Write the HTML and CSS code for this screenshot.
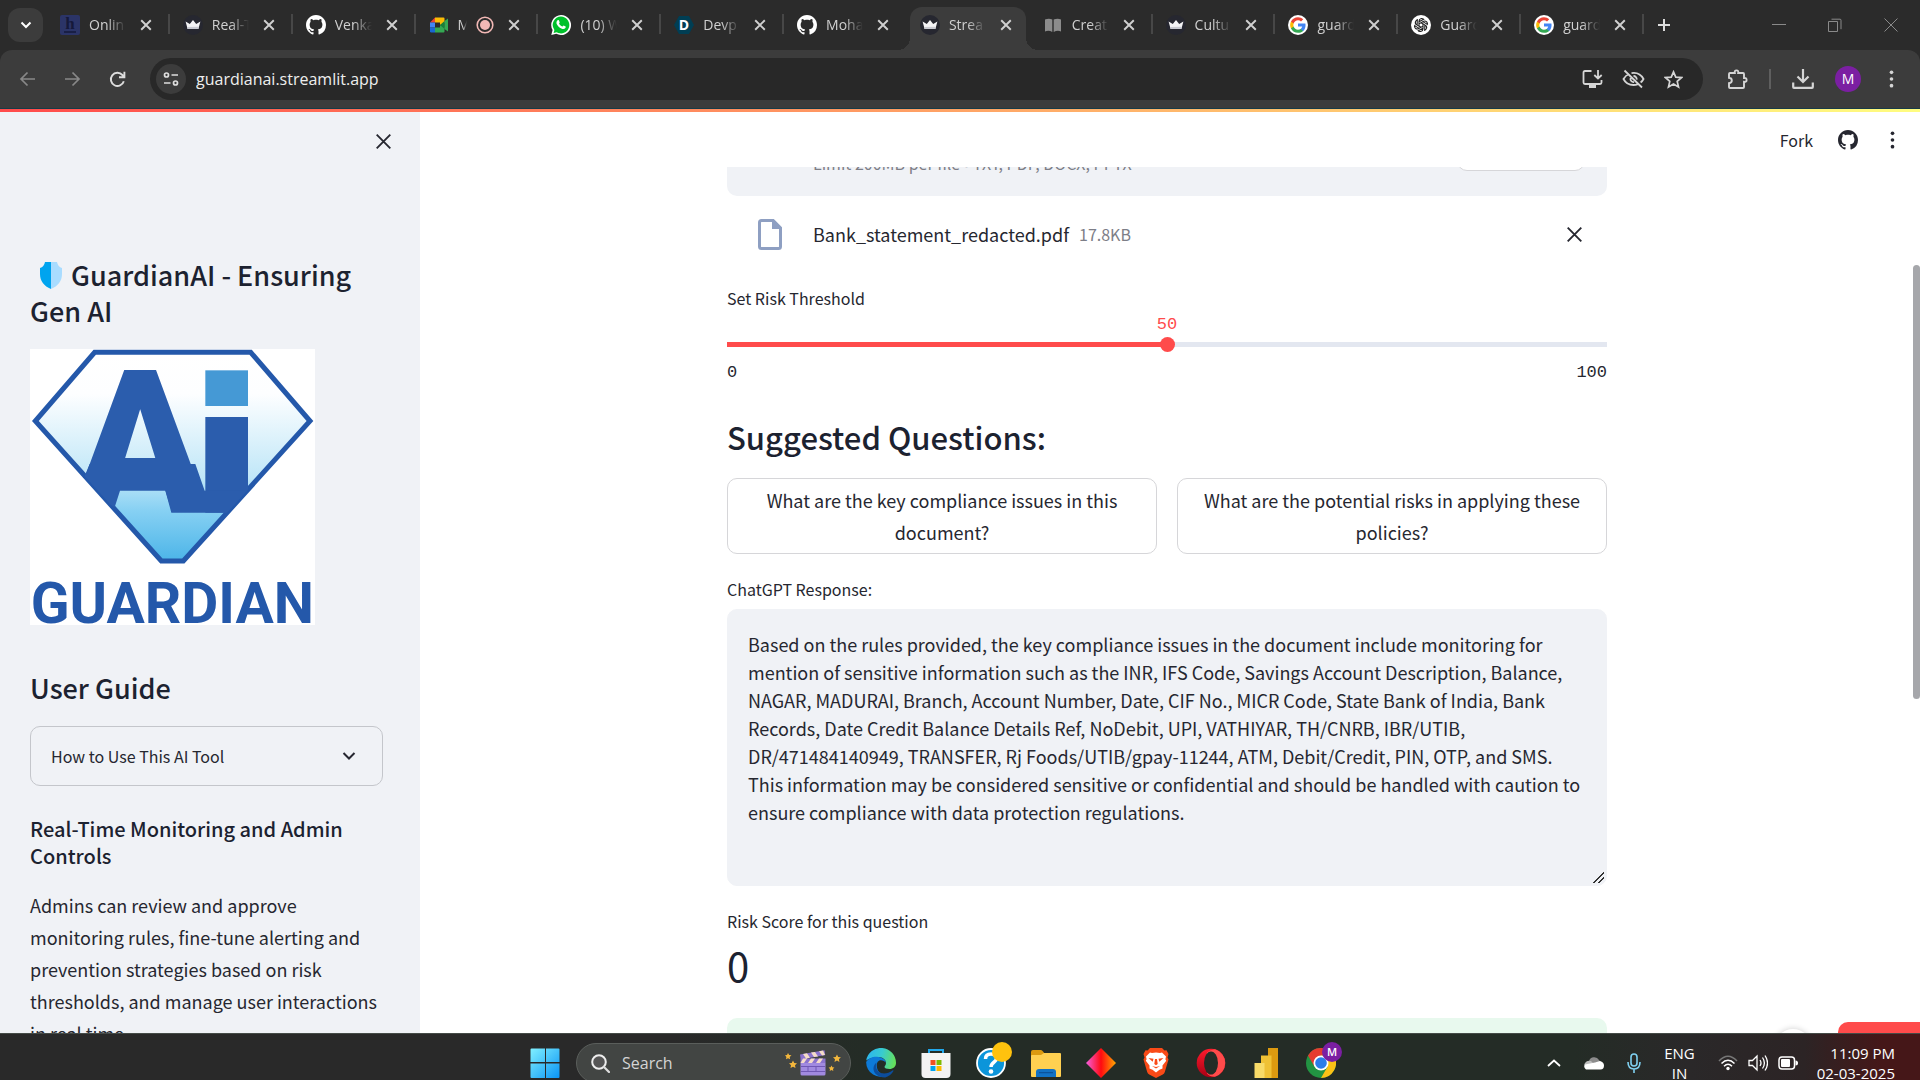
FILE: index.html
```html
<!DOCTYPE html>
<html lang="en">
  <head>
    <meta charset="UTF-8" />
    <meta name="viewport" content="width=device-width, initial-scale=1.0" />
    <title>GuardianAI</title>
    <link rel="stylesheet" href="styles.css" />
  </head>
  <body>
    <!-- shared icons -->
    <svg class="sprite" aria-hidden="true">
      <symbol id="i-close" viewBox="0 0 10 10">
        <path d="M1 1l8 8M9 1l-8 8" fill="none" stroke="currentColor" />
      </symbol>
      <symbol id="i-github" viewBox="0 0 16 16">
        <path fill="currentColor" d="M8 0C3.58 0 0 3.58 0 8c0 3.54 2.29 6.53 5.47 7.59.4.07.55-.17.55-.38 0-.19-.01-.82-.01-1.49-2.01.37-2.53-.49-2.69-.94-.09-.23-.48-.94-.82-1.13-.28-.15-.68-.52-.01-.53.63-.01 1.08.58 1.23.82.72 1.21 1.87.87 2.33.66.07-.52.28-.87.51-1.07-1.78-.2-3.64-.89-3.64-3.95 0-.87.31-1.59.82-2.15-.08-.2-.36-1.02.08-2.12 0 0 .67-.21 2.2.82.64-.18 1.32-.27 2-.27s1.36.09 2 .27c1.53-1.04 2.2-.82 2.2-.82.44 1.1.16 1.92.08 2.12.51.56.82 1.27.82 2.15 0 3.07-1.87 3.75-3.65 3.95.29.25.54.73.54 1.48 0 1.07-.01 1.93-.01 2.2 0 .21.15.46.55.38A8.01 8.01 0 0 0 16 8c0-4.42-3.58-8-8-8z" />
      </symbol>
      <symbol id="i-crown" viewBox="0 0 20 20">
        <circle cx="10" cy="10" r="10" fill="#262730" />
        <path fill="#f4f4f6" d="M2.6 6.6l4.2 2.3L10 5l3.2 3.9 4.2-2.3-2 7.4H4.6z" />
        <path fill="#c9cad2" d="M4.2 12l11.6-.2-.5 2.2H4.6z" />
      </symbol>
      <symbol id="i-google" viewBox="-2 -2 28 28">
        <circle cx="12" cy="12" r="14" fill="#fff" />
        <path fill="#4285f4" d="M22.56 12.25c0-.78-.07-1.53-.2-2.25H12v4.26h5.92c-.26 1.37-1.04 2.53-2.21 3.31v2.77h3.57c2.08-1.92 3.28-4.74 3.28-8.09z" />
        <path fill="#34a853" d="M12 23c2.97 0 5.46-.98 7.28-2.66l-3.57-2.77c-.98.66-2.23 1.06-3.71 1.06-2.86 0-5.29-1.93-6.16-4.53H2.18v2.84C3.99 20.53 7.7 23 12 23z" />
        <path fill="#fbbc05" d="M5.84 14.09c-.22-.66-.35-1.36-.35-2.09s.13-1.43.35-2.09V7.07H2.18C1.43 8.55 1 10.22 1 12s.43 3.45 1.18 4.93l3.66-2.84z" />
        <path fill="#ea4335" d="M12 5.38c1.62 0 3.06.56 4.21 1.64l3.15-3.15C17.45 2.09 14.97 1 12 1 7.7 1 3.99 3.47 2.18 7.07l3.66 2.84c.87-2.6 3.3-4.53 6.16-4.53z" />
      </symbol>
      <symbol id="i-dots" viewBox="0 0 6 24">
        <circle cx="3" cy="4" r="2.2" fill="currentColor" />
        <circle cx="3" cy="12" r="2.2" fill="currentColor" />
        <circle cx="3" cy="20" r="2.2" fill="currentColor" />
      </symbol>
    </svg>

    <!-- browser tabs -->
    <div class="tab-strip">
      <button class="tab-search" aria-label="Search tabs">
        <svg width="12" height="8" viewBox="0 0 12 8"><path d="M1.5 1.5L6 6l4.5-4.5" fill="none" stroke="#fff" stroke-width="2" /></svg>
      </button>
      <div class="tabs">
        <div class="tab">
          <svg class="favicon" viewBox="0 0 20 20"><rect width="20" height="20" rx="2" fill="#2b3467" /><text x="10" y="14" text-anchor="middle" class="fav-h">h</text><path d="M4 17h12" stroke="#15193a" stroke-width="1.5" /></svg>
          <a href="#">Onlin</a>
          <button aria-label="Close tab"><svg><use href="#i-close" /></svg></button>
        </div>
        <div class="tab">
          <svg class="favicon"><use href="#i-crown" /></svg>
          <a href="#">Real-T</a>
          <button aria-label="Close tab"><svg><use href="#i-close" /></svg></button>
        </div>
        <div class="tab">
          <svg class="favicon"><use href="#i-github" /></svg>
          <a href="#">Venka</a>
          <button aria-label="Close tab"><svg><use href="#i-close" /></svg></button>
        </div>
        <div class="tab">
          <svg class="favicon" viewBox="0 0 20 20">
            <path fill="#ea4335" d="M1 7.5L6 2.5v5z" /><path fill="#fbbc04" d="M6 2.5h8.500q1 0 1 1v4L11 10V7.5H6z" />
            <path fill="#4285f4" d="M1 7.5h5v5H1z" /><path fill="#1967d2" d="M1 12.5h5v5H2.3q-1.3 0-1.3-1.3z" />
            <path fill="#34a853" d="M6 12.5h5V10l4.5 2.5v4q0 1-1 1H6z" /><path fill="#188038" d="M11 10l4.5-4v8z" /><path fill="#34a853" d="M15.5 6L19 3.500v13L15.500 14z" />
          </svg>
          <a href="#">Meet</a>
          <svg class="recording" viewBox="0 0 18 18"><circle cx="9" cy="9" r="7.8" fill="none" stroke="#f2b8b5" stroke-width="1.6" /><circle cx="9" cy="9" r="5" fill="#f2b8b5" /></svg>
          <button aria-label="Close tab"><svg><use href="#i-close" /></svg></button>
        </div>
        <div class="tab">
          <svg class="favicon" viewBox="0 0 20 20">
            <path fill="#fff" d="M10 0a10 10 0 1 1-4.7 18.8L.3 20l1.3-4.900A10 10 0 0 1 10 0z" />
            <path fill="#00c12b" d="M10 1.6a8.400 8.400 0 1 1-4.400 15.600l-3 .7.8-2.900A8.400 8.400 0 0 1 10 1.600z" />
            <path fill="#fff" d="M6.600 5.300c.4-.4 1-.4 1.200 0l.9 1.900c.1.400-.7 1.200-.7 1.400.7 1.400 1.800 2.400 3.300 3 .3 0 1-1.100 1.300-1.100l2 1c.3.200.1 1.100-.2 1.500-.9 1.100-2.200 1.200-3.500.7-2.300-.8-4.100-2.400-5.200-4.700-.5-1.300-.2-2.800.9-3.700z" />
          </svg>
          <a href="#">(10) W</a>
          <button aria-label="Close tab"><svg><use href="#i-close" /></svg></button>
        </div>
        <div class="tab">
          <svg class="favicon" viewBox="0 0 20 20"><path fill="#003e54" d="M5 1h10l5 9-5 9H5l-5-9z" /><text x="10" y="15" text-anchor="middle" class="fav-d">D</text></svg>
          <a href="#">Devp</a>
          <button aria-label="Close tab"><svg><use href="#i-close" /></svg></button>
        </div>
        <div class="tab no-divider">
          <svg class="favicon"><use href="#i-github" /></svg>
          <a href="#">Moha</a>
          <button aria-label="Close tab"><svg><use href="#i-close" /></svg></button>
        </div>
        <div class="tab no-divider active">
          <svg class="favicon"><use href="#i-crown" /></svg>
          <a href="#">Strea</a>
          <button aria-label="Close tab"><svg><use href="#i-close" /></svg></button>
        </div>
        <div class="tab">
          <svg class="favicon" viewBox="0 0 20 20"><path fill="#8c8c8c" d="M2 4.5q4-1.5 7.3 0v12.500q-3.500-2-7.300-.5zM10.700 4.500q4-1.500 7.300 0v12q-3.500-1.500-7.300.5z" /></svg>
          <a href="#">Creat</a>
          <button aria-label="Close tab"><svg><use href="#i-close" /></svg></button>
        </div>
        <div class="tab">
          <svg class="favicon"><use href="#i-crown" /></svg>
          <a href="#">Cultu</a>
          <button aria-label="Close tab"><svg><use href="#i-close" /></svg></button>
        </div>
        <div class="tab">
          <svg class="favicon"><use href="#i-google" /></svg>
          <a href="#">guard</a>
          <button aria-label="Close tab"><svg><use href="#i-close" /></svg></button>
        </div>
        <div class="tab">
          <svg class="favicon" viewBox="0 0 20 20">
            <circle cx="10" cy="10" r="10" fill="#fff" />
            <g fill="none" stroke="#222" stroke-width="1.1" stroke-linejoin="round">
              <path id="petal" d="M8 11.200V6.300q0-2.300 2.200-2.800 2-.3 3 1.200M8 6.700l4.200-2.300" />
              <use href="#petal" transform="rotate(60 10 10)" /><use href="#petal" transform="rotate(120 10 10)" />
              <use href="#petal" transform="rotate(180 10 10)" /><use href="#petal" transform="rotate(240 10 10)" />
              <use href="#petal" transform="rotate(300 10 10)" />
            </g>
          </svg>
          <a href="#">Guard</a>
          <button aria-label="Close tab"><svg><use href="#i-close" /></svg></button>
        </div>
        <div class="tab">
          <svg class="favicon"><use href="#i-google" /></svg>
          <a href="#">guard</a>
          <button aria-label="Close tab"><svg><use href="#i-close" /></svg></button>
        </div>
      </div>
      <button class="new-tab" aria-label="New tab">
        <svg width="14" height="14" viewBox="0 0 14 14"><path d="M7 1v12M1 7h12" stroke="#ddd" stroke-width="2" /></svg>
      </button>
      <div class="window-controls">
        <button aria-label="Minimize"><svg width="14" height="14" viewBox="0 0 14 14"><path d="M0 6.5h14" stroke="#8a8a8a" /></svg></button>
        <button aria-label="Restore"><svg width="14" height="14" viewBox="0 0 14 14"><path d="M.5 3.500h9v10h-9zM3.500 1.200h8.500q1 0 1 1v9" fill="none" stroke="#8a8a8a" /></svg></button>
        <button aria-label="Close"><svg width="14" height="14" viewBox="0 0 14 14"><path d="M.5.5l13 13M13.500.5l-13 13" stroke="#8a8a8a" /></svg></button>
      </div>
    </div>

    <!-- address bar -->
    <div class="toolbar">
      <div class="nav-buttons">
        <button aria-label="Back"><svg width="17" height="16" viewBox="0 0 17 16"><path d="M16 8H2M8.500 1.500L2 8l6.500 6.500" fill="none" stroke="#888" stroke-width="1.7" /></svg></button>
        <button aria-label="Forward"><svg width="17" height="16" viewBox="0 0 17 16"><path d="M1 8h14M8.500 1.500L15 8l-6.500 6.500" fill="none" stroke="#888" stroke-width="1.7" /></svg></button>
        <button aria-label="Reload"><svg width="17" height="17" viewBox="0 0 17 17"><path d="M14.800 10.200A6.600 6.600 0 1 1 13.400 4l2 2M15.400.8V6.200H10" fill="none" stroke="#ddd" stroke-width="1.9" /></svg></button>
      </div>
      <div class="omnibox">
        <button class="site-info" aria-label="Site information">
          <svg width="16" height="14" viewBox="0 0 16 14" fill="none" stroke="#ddd" stroke-width="1.7"><circle cx="3.5" cy="3" r="2" /><path d="M8.500 3H15M1 11h6.500" /><circle cx="12.5" cy="11" r="2" /></svg>
        </button>
        <input type="text" value="guardianai.streamlit.app" aria-label="Address" />
        <div class="omnibox-actions">
          <button aria-label="Install app"><svg width="21" height="20" viewBox="0 0 21 20" fill="none" stroke="#d5d5d5" stroke-width="1.8"><path d="M9.500 2H3q-1.500 0-1.500 1.500v10Q1.500 15 3 15h15q1.500 0 1.500-1.500V11M16 1v8M12.300 6l3.700 3.500L19.700 6" /><path d="M7 17h7" stroke-width="4" /></svg></button>
          <button aria-label="Tracking protection"><svg width="23" height="20" viewBox="0 0 23 20" fill="none" stroke="#d5d5d5" stroke-width="1.8"><path d="M2.500 1.500l17.500 17M7 5C4.500 6 2.700 7.700 1.500 10c2 4 5.800 6 10 6 1.500 0 2.700-.2 4-.7M9.500 4.100c5-.8 9.700 1.600 12 5.900-.7 1.400-1.700 2.600-2.900 3.500M11.500 7a3.200 3.200 0 0 1 3.200 3.600M8.600 9a3.200 3.200 0 0 0 3.500 4.100" /></svg></button>
          <button aria-label="Bookmark"><svg width="19" height="19" viewBox="0 0 20 20"><path d="M10 2l2.400 5.500 6 .5-4.500 4 1.400 5.900L10 14.800 4.700 17.900l1.400-5.900-4.500-4 6-.5z" fill="none" stroke="#d5d5d5" stroke-width="1.8" /></svg></button>
        </div>
      </div>
      <div class="toolbar-actions">
        <button aria-label="Extensions"><svg width="21" height="21" viewBox="0 0 21 21"><path d="M3 4h4.800q-.5-2.600 1.700-2.600T11.200 4H16q1 0 1 1v4q2.600-.4 2.600 1.900T17 12.800V18q0 1-1 1H3q-1 0-1-1v-3.800q2.800-.3 2.800-2.700T2 8.800V5q0-1 1-1z" fill="none" stroke="#d5d5d5" stroke-width="1.9" /></svg></button>
        <span class="separator"></span>
        <button aria-label="Downloads"><svg width="22" height="20" viewBox="0 0 22 20" fill="none" stroke="#d5d5d5" stroke-width="2.2"><path d="M11 0v12.500M5.500 7.500L11 13l5.500-5.500M1.200 13.500V18q0 .8.800.8h18q.8 0 .8-.8v-4.500" /></svg></button>
        <button class="profile">M</button>
        <button class="menu" aria-label="Menu"><svg width="5" height="20"><use href="#i-dots" /></svg></button>
      </div>
    </div>
    <div class="decoration"></div>

    <div class="app">
      <aside class="sidebar">
        <div class="sidebar-header">
          <button aria-label="Close sidebar"><svg class="thin-close"><use href="#i-close" /></svg></button>
        </div>
        <h2 class="sidebar-title">
          <svg class="shield" viewBox="0 0 22 27"><path fill="#00a4ef" d="M11 0v27C4 24 0 19 0 12V6q4-1 5-6z" /><path fill="#a9dcff" d="M11 0v27c7-3 11-8 11-15V6q-4-1-5-6z" /></svg>
          GuardianAI - Ensuring Gen AI
        </h2>

        <svg class="brand" viewBox="0 0 855 828" role="img" aria-label="Guardian AI">
          <defs>
            <linearGradient id="sky" x1="0" y1="0" x2="0" y2="1">
              <stop offset="0" stop-color="#fff" /><stop offset=".2" stop-color="#fdfeff" />
              <stop offset=".6" stop-color="#c0e7f8" /><stop offset=".76" stop-color="#86d0f3" />
              <stop offset="1" stop-color="#4cb5e8" />
            </linearGradient>
            <clipPath id="gem"><path d="M194 10h468l178 206-380 420h-66L16 216z" /></clipPath>
          </defs>
          <rect width="855" height="828" fill="#fff" />
          <path d="M194 10h468l178 206-380 420h-66L16 216z" fill="url(#sky)" stroke="#2458aa" stroke-width="15" />
          <g clip-path="url(#gem)" fill="#2b5dad">
            <text x="130" y="483" class="brand-a">A</text>
            <rect x="526" y="204" width="128" height="287" />
            <!-- base band that joins both letters -->
            <path d="M179 345h317l28 80h130v66H424l-18-66H270l-16 50-104-60z" />
          </g>
          <rect x="526" y="64" width="128" height="107" fill="#4599d5" />
          <text x="427" y="822" text-anchor="middle" class="brand-name">GUARDIAN</text>
        </svg>

        <h2 class="guide-title">User Guide</h2>
        <button class="expander">
          <span>How to Use This AI Tool</span>
          <svg width="14" height="10" viewBox="0 0 14 10"><path d="M1.500 2L7 7.500 12.500 2" fill="none" stroke="currentColor" stroke-width="2" /></svg>
        </button>
        <h3 class="admin-title">Real-Time Monitoring and Admin Controls</h3>
        <p class="admin-text">
          Admins can review and approve monitoring rules, fine-tune alerting and
          prevention strategies based on risk thresholds, and manage user
          interactions in real time.
        </p>
      </aside>

      <main class="main">
        <header class="app-header">
          <a href="#">Fork</a>
          <a href="#" aria-label="GitHub"><svg width="20" height="20"><use href="#i-github" /></svg></a>
          <button aria-label="App menu"><svg width="5" height="20"><use href="#i-dots" /></svg></button>
        </header>

        <div class="viewport">
          <div class="block">
            <!-- file uploader -->
            <div class="dropzone">
              <div class="dropzone-text">
                <span>Drag and drop file here</span>
                <small>Limit 200MB per file • TXT, PDF, DOCX, PPTX</small>
              </div>
              <button class="browse">Browse files</button>
            </div>
            <div class="file-row">
              <svg class="file-icon" width="24" height="31" viewBox="0 0 24 31"><path d="M3.500 1.500h11.700l7.300 7.300v18.700q0 2-2 2h-17q-2 0-2-2v-24q0-2 2-2z" fill="none" stroke="#8e9fc2" stroke-width="3" /><path d="M14 1l9 9h-9z" fill="#8e9fc2" /></svg>
              <span class="file-name">Bank_statement_redacted.pdf</span>
              <small>17.8KB</small>
              <button aria-label="Remove file"><svg class="thin-close"><use href="#i-close" /></svg></button>
            </div>

            <!-- slider -->
            <div class="slider">
              <label for="risk">Set Risk Threshold</label>
              <output for="risk">50</output>
              <input type="range" id="risk" min="0" max="100" value="50" />
              <div class="slider-ticks"><span>0</span><span>100</span></div>
            </div>

            <h2 class="questions-title">Suggested Questions:</h2>
            <div class="questions">
              <button>What are the key compliance issues in this document?</button>
              <button>What are the potential risks in applying these policies?</button>
            </div>

            <label class="response-label" for="response">ChatGPT Response:</label>
            <textarea id="response">Based on the rules provided, the key compliance issues in the document include monitoring for mention of sensitive information such as the INR, IFS Code, Savings Account Description, Balance, NAGAR, MADURAI, Branch, Account Number, Date, CIF No., MICR Code, State Bank of India, Bank Records, Date Credit Balance Details Ref, NoDebit, UPI, VATHIYAR, TH/CNRB, IBR/UTIB, DR/471484140949, TRANSFER, Rj Foods/UTIB/gpay-11244, ATM, Debit/Credit, PIN, OTP, and SMS. This information may be considered sensitive or confidential and should be handled with caution to ensure compliance with data protection regulations.</textarea>

            <div class="metric">
              <div class="metric-label">Risk Score for this question</div>
              <div class="metric-value">0</div>
            </div>
            <div class="success"></div>
          </div>
          <div class="scroll-thumb"></div>
          <div class="badge-avatar"></div>
          <div class="badge-host"></div>
        </div>
      </main>
    </div>

    <!-- windows taskbar -->
    <footer class="taskbar">
      <div class="taskbar-inner">
        <div class="pinned">
          <button aria-label="Start">
            <svg viewBox="0 0 30 30"><defs><linearGradient id="win" x1="0" y1="0" x2="1" y2="1"><stop offset="0" stop-color="#80f0ff" /><stop offset="1" stop-color="#0a94f5" /></linearGradient></defs><path fill="url(#win)" d="M1.500.5H15V14H.5V1.500q0-1 1-1zM16 .5h12.500q1 0 1 1V14H16zM.5 15.500H15V30H1.500q-1 0-1-1zM16 15.500h13.500V29q0 1-1 1H16z" /></svg>
          </button>
          <label class="taskbar-search">
            <svg width="19" height="19" viewBox="0 0 19 19"><circle cx="8" cy="8" r="6.8" fill="#555" stroke="#eee" stroke-width="2" /><path d="M13 13l5 5" stroke="#ddd" stroke-width="2.2" stroke-linecap="round" /></svg>
            <input type="text" placeholder="Search" />
            <svg width="56" height="28" viewBox="0 0 56 28">
              <path fill="#f2b63c" d="M3 4l1.200 2 2.300.3-1.800 1.600.4 2.300L3 9.200l-2 1 .4-2.300L0 6.300 2 6zM8 11.500l1.300 2.400 2.700.4-2 2 .5 2.700L8 17.700 5.500 19l.5-2.700-2-2 2.700-.4zM52 5.500l1.200 2.400 2.700.4-2 1.900.5 2.700-2.400-1.300-2.500 1.300.5-2.700-2-1.900 2.700-.4zM46.500 16.500l.9 1.800 2 .3-1.400 1.400.3 2-1.800-1-1.800 1 .3-2-1.400-1.400 2-.3z" />
              <rect x="15.5" y="13" width="25" height="13.5" rx="1.5" fill="#a18ae0" /><path d="M16 17.500h24M16 22.500h24M23 17.500v5M31 17.500v5" stroke="#7058b5" />
              <path fill="#8a72cf" d="M15 5.500l24.500-4.300.7 4.800-24.500 4.500zM15.500 9.500h25v4.500h-25z" />
              <path fill="#f5dcc8" d="M18 5l4-.7 3 4.500-4 .7zM26 3.600l4-.7 3 4.500-4 .7zM34 2.200l4-.7 2 4.500-3 .6zM18 9.500h4l-3 4.500h-3.500zM26 9.500h4L27 14h-4zM34 9.500h4L35 14h-4z" />
            </svg>
          </label>
          <button aria-label="Edge">
            <svg viewBox="0 0 30 30"><defs><linearGradient id="eg" x1="0" y1=".3" x2="1" y2=".5"><stop offset="0" stop-color="#2bb5f0" /><stop offset=".5" stop-color="#38cbd0" /><stop offset="1" stop-color="#66e05a" /></linearGradient></defs>
              <path fill="url(#eg)" d="M.2 12.500A15 15 0 0 1 30 15c0 3.800-3 6-6.500 6-3 0-5-1-5-2s1.500-1.500 1.500-4c0-3-3-6-8-6C5.500 9 1 12 .2 12.500z" />
              <path fill="#0d7ad8" d="M.1 14C2 10.500 6.500 8.500 11 8.700c5 .3 8.500 3 8.900 6-1-1.500-2.900-2.500-5-2.500-4 0-5 5-3.500 9 1.500 4 6 6.500 10 6.300A15 15 0 0 1 .1 14z" />
              <path fill="#0c4d9c" d="M10.500 14.500c-1 3.500-.5 7.500 3 9.800 3.500 2.200 9 1.200 13-1.800.8-.5 1.200.2.700.9a15 15 0 0 1-8 6C12 29.500 7 25 7.500 20c.2-2.300 1.500-4.500 3-5.500z" /></svg>
          </button>
          <button aria-label="Microsoft Store">
            <svg viewBox="0 0 30 30"><path d="M8 6V2h14v4" fill="none" stroke="#22a8ec" stroke-width="2" /><path fill="#f3f3f3" d="M.5 5h29v21q0 4-4 4h-21q-4 0-4-4z" /><path fill="#f25022" d="M9.500 12h5v5h-5z" /><path fill="#7fba00" d="M15.500 12h5v5h-5z" /><path fill="#00a4ef" d="M9.500 18h5v5h-5z" /><path fill="#ffb900" d="M15.500 18h5v5h-5z" /></svg>
          </button>
          <button aria-label="Get Help">
            <svg viewBox="0 0 30 30"><circle cx="15" cy="15" r="14" fill="#0c95da" stroke="#fff" stroke-width="1.8" /><path d="M9.500 11q0-5 5.500-5t5.500 4.500c0 3.500-5.500 4-5.500 8.500" fill="none" stroke="#fff" stroke-width="3.5" /><circle cx="15" cy="23.5" r="2.3" fill="#fff" /></svg>
            <span class="app-badge yellow"></span>
          </button>
          <button aria-label="File Explorer">
            <svg viewBox="0 0 30 30"><path fill="#dc9a10" d="M0 4q0-2 2-2h8q1 0 2 1.500L14 6v5H0z" /><path fill="#ffd051" d="M0 8q0-1 1-1h9l3-2h16q1 0 1 1v22q0 1-1 1H1q-1 0-1-1z" /><path fill="#1272c4" d="M5 29v-5q0-3 3-3h14q3 0 3 3v5z" /><path d="M8 24.700h14" stroke="#0a4d91" /></svg>
          </button>
          <button aria-label="Diamond">
            <svg viewBox="0 0 30 30"><defs><linearGradient id="dia"><stop offset="0" stop-color="#f65fe0" /><stop offset=".5" stop-color="#ff0a10" /><stop offset="1" stop-color="#ffa800" /></linearGradient></defs><path fill="url(#dia)" d="M15 0l15 15-15 15L0 15z" /></svg>
          </button>
          <button aria-label="Brave">
            <svg viewBox="0 0 30 30"><path fill="#f94a17" d="M9 0h12l2.500 2.500 2-.3L27.500 6l-1 3.500 1 2-3.700 12.500q-.5 1.500-2 2.500L15 30l-6.800-3.500q-1.500-1-2-2.500L2.500 11.500l1-2-1-3.500 2-3.800 2 .3z" /><path fill="#fff" d="M15 4.500l4 .5 2-.6 4 4.200-.6 2.600.8 1.600-3.700 4.700 0 3-3 1.200L15 24.500l-3.500-2.800-3-1.200v-3L4.800 12.800l.8-1.600L5 8.600 9 4.400l2 .6z" /><path fill="#f94a17" d="M7.500 10l5 .8-.8 3zM22.500 10l-5 .8.8 3zM14 11h2l.7 5L15 17.200 13.300 16zM11 18l4 2.500 4-2.500-4 1z" /></svg>
          </button>
          <button aria-label="Opera">
            <svg viewBox="0 0 30 30"><defs><linearGradient id="op" x1="0" y1="0" x2="0" y2="1"><stop offset="0" stop-color="#ff1b2d" /><stop offset="1" stop-color="#a70014" /></linearGradient></defs><circle cx="15" cy="15" r="14.3" fill="url(#op)" /><path fill="#ff4b4b" d="M11 4.500A14.300 14.300 0 0 1 19 1.300a14.300 14.300 0 0 1 0 27.400Q14 29 11 25.500z" /><ellipse cx="15" cy="15" rx="7" ry="11.5" fill="#242c26" /></svg>
          </button>
          <button aria-label="Power BI">
            <svg viewBox="0 0 30 30"><path fill="#dc9a10" d="M17 0h10v30H17z" /><path fill="#efc135" d="M10 7.500h10.500V30H10z" /><path fill="#f8db68" d="M3.500 15h10v15h-10z" /></svg>
          </button>
          <button aria-label="Chrome">
            <svg viewBox="0 0 30 30"><circle cx="15" cy="15" r="15" fill="#229342" /><path fill="#e53b30" d="M2 7.500a15 15 0 0 1 26 0H15L8.500 18.800z" /><path fill="#fbc116" d="M28 7.500A15 15 0 0 1 15 30l6.500-11.300L15 7.500z" /><circle cx="15" cy="15" r="7.5" fill="#fff" /><circle cx="15" cy="15" r="5.8" fill="#2b7de9" /></svg>
            <span class="app-badge purple">M</span>
          </button>
        </div>

        <div class="tray">
          <button aria-label="Hidden icons"><svg width="14" height="8" viewBox="0 0 14 8"><path d="M1 7l6-5.500L13 7" fill="none" stroke="#fff" stroke-width="1.8" /></svg></button>
          <svg width="20" height="14" viewBox="0 0 20 14"><path fill="#8c8c8c" d="M5 5a5.500 5.500 0 0 1 10-1l3 4-9 2z" /><path fill="#bdbdbd" d="M1 7q2-3 6-2l6 6H3q-4-1-2-4z" /><path fill="#fff" d="M2 13.500q-3-2.500-1-5l10-2 5-1.500q4 1 4 4.500 0 4-3.500 4z" /></svg>
          <svg width="14" height="20" viewBox="0 0 14 20" fill="none" stroke="#7fd0f0" stroke-width="1.6"><rect x="4" y="1" width="6" height="12" rx="3" /><path d="M1 9q0 7 6 7t6-7M7 16v4" /></svg>
          <div class="language">ENG<br />IN</div>
          <div class="status">
            <svg width="20" height="16" viewBox="0 0 20 16" fill="none" stroke="#fff" stroke-width="1.5"><path d="M1 6Q10-3.500 19 6" stroke="#777" /><path d="M3.500 8.500q6.500-6.500 13 0M6 11.200q4-4 8 0" /><circle cx="10" cy="13.5" r="1.7" fill="#fff" stroke="none" /></svg>
            <svg width="20" height="18" viewBox="0 0 20 18" fill="none" stroke="#fff" stroke-width="1.3"><path d="M1 6.500h3.500L9 2v14l-4.500-4.500H1zM12 6q2 3 0 6M14.500 3.500q3.800 5.500 0 11M17 1.500q5 7.500 0 15" /></svg>
            <svg width="20" height="14" viewBox="0 0 20 14"><rect x="1" y="1" width="15.5" height="12" rx="3" fill="none" stroke="#fff" stroke-width="1.5" /><rect x="3" y="3" width="9" height="8" rx="1" fill="#fff" /><path fill="#fff" d="M17.500 4.500q2.500 0 2.500 2.500t-2.500 2.500z" /></svg>
          </div>
          <div class="clock">11:09 PM<br />02-03-2025</div>
        </div>
      </div>
    </footer>
  </body>
</html>
```

FILE: styles.css
```css
:root {
  --text: #262730;
  --heading: #1c2230;
  --muted: #7d7e87;
  --primary: #ff4b4b;
  --panel: #f0f2f6;
  --border: #d6d6d9;
  --chrome: #2b2b2b;
  --chrome-light: #3c3c3c;
}

* {
  box-sizing: border-box;
}

body {
  margin: 0;
  height: 100vh;
  display: flex;
  flex-direction: column;
  overflow: hidden;
  font-family: "Noto Sans CJK JP", "Noto Sans", sans-serif;
  font-size: 18px;
  line-height: 32px;
  color: var(--text);
  background: #fff;
}

button {
  font: inherit;
  color: inherit;
  background: none;
  border: 0;
  padding: 0;
  cursor: pointer;
}

a {
  color: inherit;
  text-decoration: none;
}

h2,
h3,
p {
  margin: 0;
}

h2,
h3 {
  font-weight: 500;
  color: var(--heading);
}

svg {
  display: block;
}

.sprite {
  display: none;
}

/* tab strip */
.tab-strip,
.toolbar,
.taskbar {
  font-family: "Open Sans", sans-serif;
}

.tab-strip {
  flex: none;
  display: flex;
  height: 50px;
  background: var(--chrome);
  color: #d0d0d0;
}

.tab-search {
  flex: none;
  display: flex;
  align-items: center;
  justify-content: center;
  width: 35px;
  height: 34px;
  margin: 8px 4px 0 8px;
  border-radius: 12px;
  background: var(--chrome-light);
}

.tabs {
  flex: 0 1 1597px;
  min-width: 0;
  display: flex;
}

.tab {
  position: relative;
  flex: 1;
  min-width: 0;
  display: flex;
  align-items: center;
  gap: 9px;
  padding: 0 13px 0 13px;
  background: linear-gradient(#474747, #474747) right 14px / 2px 20px no-repeat;
}

.tab.no-divider {
  background: none;
}

.tab > * {
  position: relative;
}

.favicon {
  flex: none;
  width: 20px;
  height: 20px;
  color: #fff;
}

.fav-h {
  font: 700 17px "Liberation Serif", serif;
  fill: #15193a;
}

.fav-d {
  font: 700 14px "Open Sans", sans-serif;
  fill: #fff;
}

.tab a {
  flex: 1;
  min-width: 0;
  overflow: hidden;
  white-space: nowrap;
  font-size: 14px;
  line-height: 20px;
  mask-image: linear-gradient(to right, #000 50%, transparent);
}

.recording {
  flex: none;
  width: 18px;
  height: 18px;
}

.tab button {
  flex: none;
  width: 22px;
  height: 22px;
  display: flex;
  align-items: center;
  justify-content: center;
}

.tab button svg {
  width: 12px;
  height: 12px;
  stroke-width: 1.6;
}

.tab.active::before {
  content: "";
  position: absolute;
  inset: 7px 4px 0 3px;
  border-radius: 12px 12px 0 0;
  background: var(--chrome-light);
}

.tab.active::after {
  content: "";
  position: absolute;
  bottom: 0;
  left: -9px;
  right: -8px;
  height: 12px;
  background:
    radial-gradient(circle at 0 0, transparent 12px, var(--chrome-light) 12px) left / 12px 12px no-repeat,
    radial-gradient(circle at 100% 0, transparent 12px, var(--chrome-light) 12px) right / 12px 12px no-repeat;
}

.new-tab {
  padding: 0 14px 0 13px;
}

.window-controls {
  margin-left: auto;
  display: flex;
  align-items: center;
  gap: 42px;
  padding-right: 22px;
}

/* toolbar */
.toolbar {
  flex: none;
  display: flex;
  align-items: center;
  height: 58px;
  border-radius: 12px 12px 0 0;
  background: var(--chrome-light);
  box-shadow: 0 -12px 0 0 var(--chrome);
  clip-path: inset(0);
}

.nav-buttons {
  display: flex;
  gap: 28px;
  width: 150px;
  padding-left: 19px;
}

.omnibox {
  flex: 1;
  display: flex;
  align-items: center;
  height: 42px;
  padding: 0 20px 0 6px;
  border-radius: 21px;
  background: #282828;
}

.site-info {
  display: flex;
  align-items: center;
  justify-content: center;
  width: 30px;
  height: 30px;
  border-radius: 50%;
  background: var(--chrome-light);
}

.omnibox input {
  flex: 1;
  margin-left: 10px;
  padding: 0;
  border: 0;
  outline: 0;
  background: none;
  color: #eee;
  font: 16px "Open Sans", sans-serif;
}

.omnibox-actions {
  display: flex;
  align-items: center;
  gap: 19px;
}

.toolbar-actions {
  display: flex;
  align-items: center;
  gap: 21px;
  padding: 0 26px 0 24px;
}

.separator {
  width: 2px;
  height: 20px;
  background: #5f5f5f;
}

.profile {
  width: 26px;
  height: 26px;
  border-radius: 50%;
  background: #7b1fa2;
  color: #fff;
  font-size: 14px;
  line-height: 26px;
}

.menu {
  color: #d5d5d5;
  margin-left: 7px;
}

.decoration {
  flex: none;
  height: 4px;
  border-top: 1px solid #173b48;
  background: linear-gradient(to right, #ff4b4b, #fffd80);
}

/* app layout */
.app {
  flex: 1;
  min-height: 0;
  display: flex;
}

.thin-close {
  width: 17px;
  height: 17px;
  stroke-width: 1.1;
}

.sidebar {
  flex: none;
  width: 420px;
  padding: 0 37px 0 30px;
  overflow: hidden;
  background: var(--panel);
}

.sidebar-header {
  display: flex;
  justify-content: flex-end;
  padding: 21px 0 107px;
}

.sidebar-header button {
  margin-right: -9px;
}

.sidebar-title,
.guide-title {
  font-size: 27px;
  line-height: 36px;
}

.shield {
  display: inline-block;
  width: 22px;
  height: 27px;
  margin: 0 3px 0 10px;
  vertical-align: -3px;
}

.brand {
  width: 285px;
  height: 276px;
  margin: 20px 0 45px;
}

.brand-a {
  font: 900 590px Roboto, sans-serif;
}

.brand-name {
  font: 700 171px Roboto, sans-serif;
  fill: #2458aa;
}

.guide-title {
  margin-bottom: 20px;
}

.expander {
  display: flex;
  align-items: center;
  justify-content: space-between;
  width: 100%;
  height: 60px;
  padding: 0 26px 0 20px;
  border: 1px solid #c4c6cb;
  border-radius: 10px;
  font-size: 16px;
}

.admin-title {
  margin: 29px 0 20px;
  font-size: 20px;
  line-height: 27px;
}

/* main */
.main {
  flex: 1;
  min-width: 0;
  display: flex;
  flex-direction: column;
}

.app-header {
  flex: none;
  display: flex;
  align-items: center;
  justify-content: flex-end;
  gap: 25px;
  height: 55px;
  padding-right: 25px;
  font-size: 16px;
}

.app-header button {
  margin-left: 7px;
}

.viewport {
  position: relative;
  flex: 1;
  min-height: 0;
  overflow: hidden;
  padding-right: 6px;
}

/* scrolled past the top of the uploader */
.block {
  max-width: 880px;
  margin: -69px auto 0;
}

.dropzone {
  display: flex;
  align-items: center;
  justify-content: space-between;
  height: 98px;
  padding: 0 22px 0 86px;
  border-radius: 10px;
  background: var(--panel);
}

.dropzone-text {
  display: flex;
  flex-direction: column;
}

.dropzone small {
  font-size: 16px;
  line-height: 22px;
  color: var(--muted);
}

.browse {
  width: 128px;
  height: 48px;
  border: 1px solid var(--border);
  border-radius: 10px;
  background: #fff;
}

.file-row {
  display: flex;
  align-items: center;
  height: 76px;
  padding: 0 24px 0 31px;
}

.file-name {
  margin: 0 10px 0 31px;
}

.file-row small {
  font-size: 16px;
  color: var(--muted);
}

.file-row button {
  margin-left: auto;
}

/* slider */
.slider {
  display: flex;
  flex-direction: column;
  margin-top: 11px;
}

.slider label,
.response-label,
.metric-label {
  display: block;
  font-size: 16px;
  line-height: 30px;
}

.slider output,
.slider-ticks {
  font: 17px/24px "Liberation Mono", monospace;
}

.slider output {
  align-self: center;
  color: var(--primary);
}

.slider input {
  appearance: none;
  width: 100%;
  height: 14px;
  margin: 0;
  background: linear-gradient(to right, var(--primary) 50%, #e3e7f0 50%) center / 100% 5px no-repeat;
}

.slider input::-webkit-slider-thumb {
  appearance: none;
  width: 15px;
  height: 15px;
  border-radius: 50%;
  background: var(--primary);
}

.slider-ticks {
  display: flex;
  justify-content: space-between;
  margin-top: 10px;
}

/* questions */
.questions-title {
  margin: 32px 0 21px;
  font-size: 31px;
  line-height: 40px;
}

.questions {
  display: grid;
  grid-template-columns: 1fr 1fr;
  gap: 20px;
}

.questions button {
  padding: 5px 16px;
  border: 1px solid var(--border);
  border-radius: 10px;
  background: #fff;
}

.response-label {
  margin-top: 20px;
}

textarea {
  display: block;
  width: 100%;
  height: 277px;
  margin-top: 5px;
  padding: 20px;
  border: 1px solid var(--panel);
  border-radius: 10px;
  outline: 0;
  resize: vertical;
  background: var(--panel);
  color: var(--text);
  font: inherit;
  line-height: 28px;
}

textarea::-webkit-resizer {
  background: linear-gradient(135deg, transparent 46%, #333 46%, #333 56%, transparent 56%, transparent 70%, #333 70%, #333 80%, transparent 80%) 2px 2px / 11px 11px no-repeat;
}

.metric {
  margin: 20px 0 24px;
}

.metric-value {
  font-size: 40px;
  line-height: 58px;
  color: var(--heading);
}

.success {
  height: 80px;
  border-radius: 10px;
  background: #e8f9ee;
}

.scroll-thumb {
  position: absolute;
  top: 98px;
  right: 0;
  width: 7px;
  height: 434px;
  border-radius: 4px;
  background: #a6a7ab;
}

.badge-avatar {
  position: absolute;
  right: 108px;
  bottom: -34px;
  width: 38px;
  height: 38px;
  border-radius: 50%;
  background: #fff;
  box-shadow: 0 0 6px rgba(0, 0, 0, 0.2);
}

.badge-host {
  position: absolute;
  right: 0;
  bottom: 0;
  width: 82px;
  height: 11px;
  border-radius: 10px 0 0 0;
  background: var(--primary);
}

/* taskbar */
.taskbar {
  flex: none;
  height: 47px;
  overflow: hidden;
  border-top: 1px solid #454b47;
  color: #fff;
  background: linear-gradient(to right, #292929 35%, #242c26 45%, #242c26 82%, #2a2829 88%, #2c2425 94%, #451718 98%);
}

.taskbar-inner {
  display: flex;
  align-items: center;
  justify-content: space-between;
  height: 58px;
  padding: 0 25px 0 530px;
}

.pinned {
  display: flex;
  align-items: center;
  gap: 25px;
}

.pinned button {
  position: relative;
  width: 30px;
  height: 30px;
}

.taskbar-search {
  display: flex;
  align-items: center;
  width: 275px;
  height: 40px;
  margin: 0 -10px 0 -9px;
  padding: 0 9px 0 14px;
  border: 1px solid #5a5e5b;
  border-radius: 20px;
  background: #424543;
}

.taskbar-search input {
  flex: 1;
  min-width: 0;
  padding: 0 0 0 12px;
  border: 0;
  outline: 0;
  background: none;
  color: #fff;
  font: 16px "Open Sans", sans-serif;
}

.taskbar-search input::placeholder {
  color: #d4d4d4;
}

.app-badge {
  position: absolute;
  top: -6px;
  right: -6px;
  width: 20px;
  height: 20px;
  border-radius: 50%;
  font-size: 11px;
  font-weight: 600;
  line-height: 20px;
}

.yellow {
  background: #ffc20e;
}

.purple {
  background: #7b1fa2;
}

.tray {
  display: flex;
  align-items: center;
  gap: 23px;
  font-size: 15px;
  line-height: 20px;
}

.language {
  text-align: center;
}

.status {
  display: flex;
  align-items: center;
  gap: 10px;
  margin-right: -4px;
}

.clock {
  text-align: right;
}
```
